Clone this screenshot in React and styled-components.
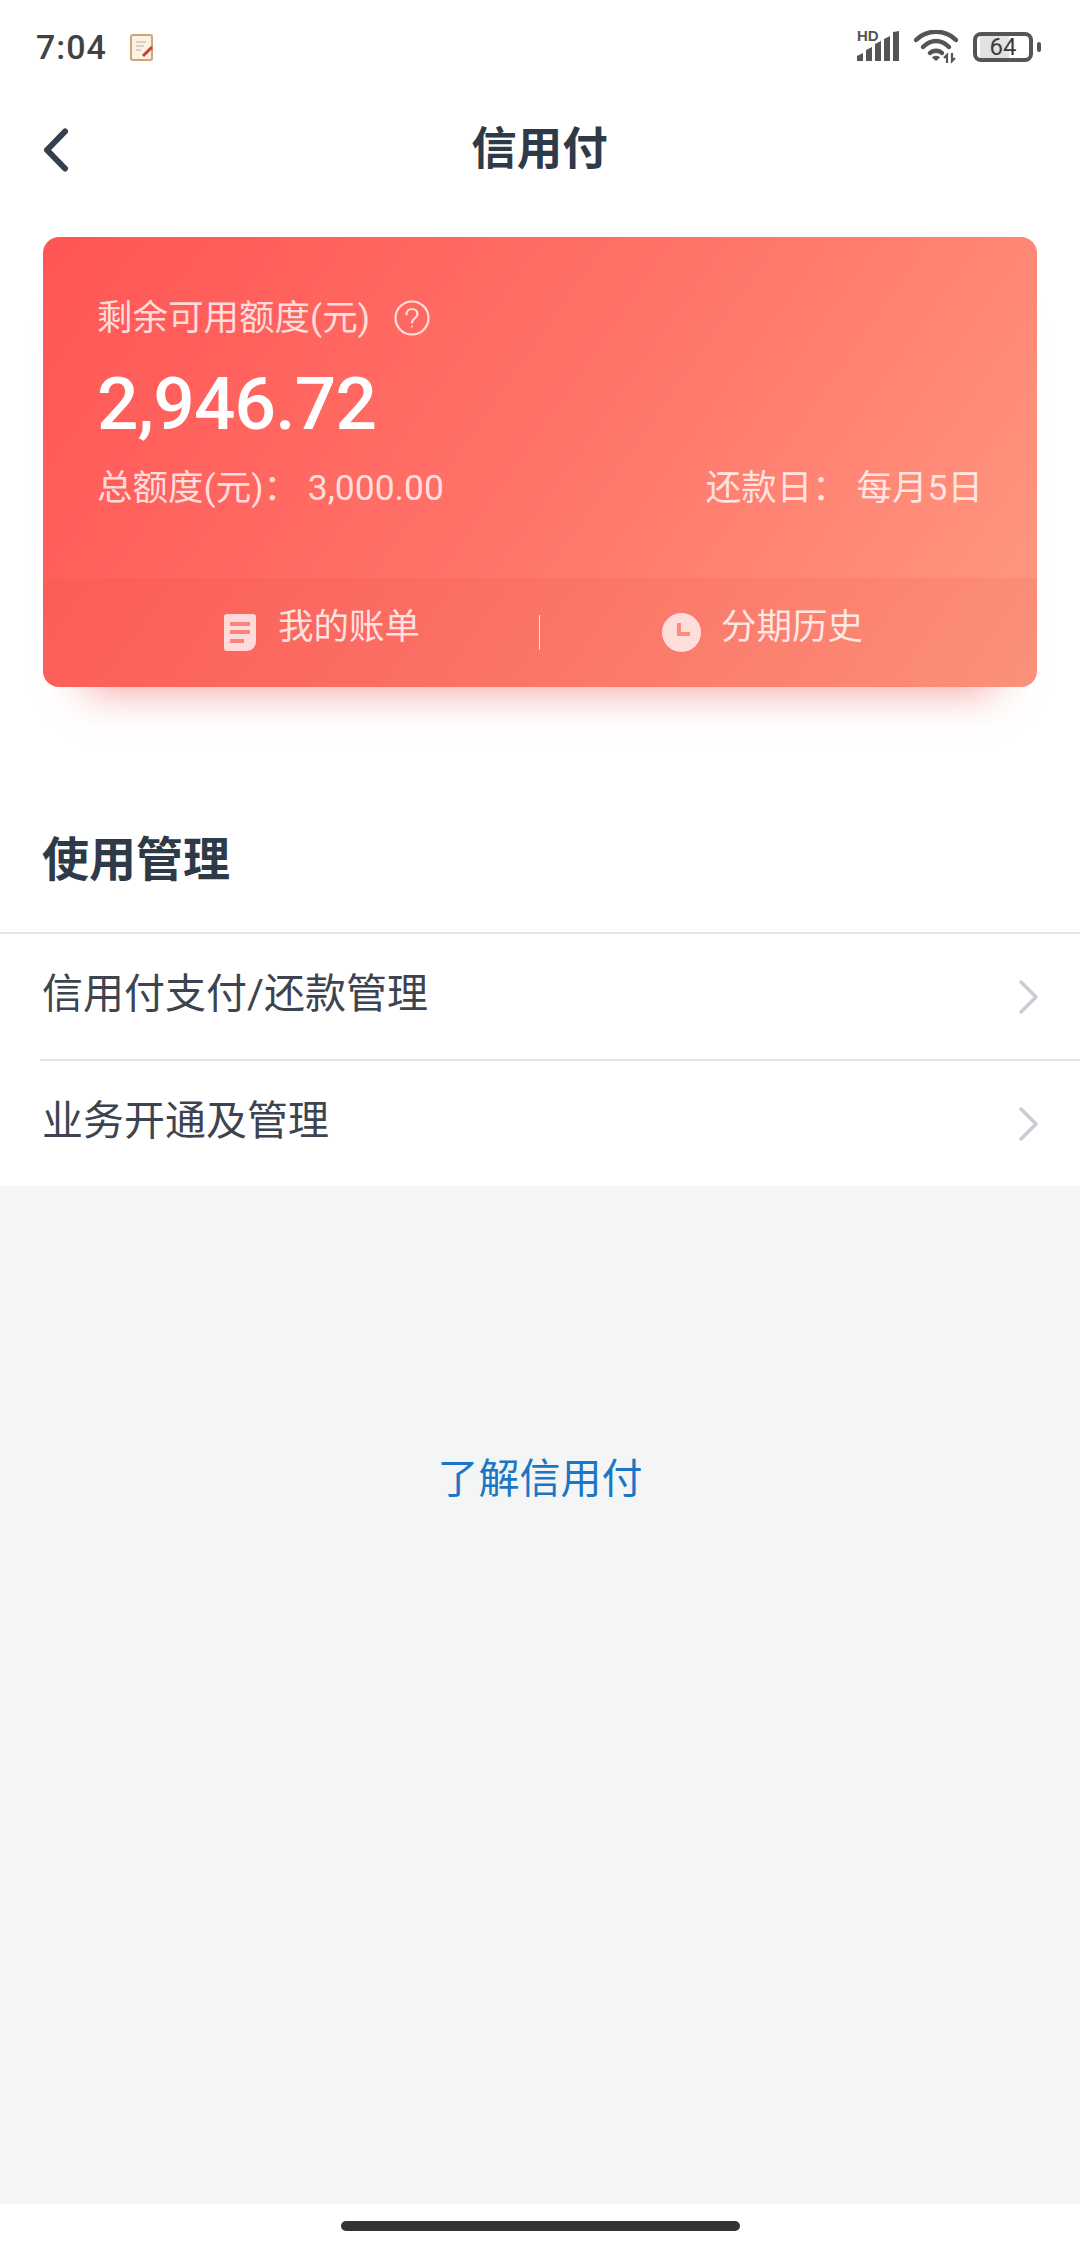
import React from 'react'
import styled, { createGlobalStyle } from 'styled-components'

const GlobalStyle = createGlobalStyle`
  html, body { margin: 0; padding: 0; background: #fff; }
  * { box-sizing: border-box; }
  body { font-family: Roboto, "Noto Sans CJK SC", sans-serif; }
`

const Page = styled.div`
  width: 1080px;
  height: 2248px;
  display: flex;
  flex-direction: column;
  background: #fff;
  overflow: hidden;
`

const StatusBar = styled.div`
  height: 94px;
  flex: none;
  display: flex;
  align-items: center;
  padding: 0 39px 0 36px;
`

const Time = styled.span`
  font-size: 34px;
  font-weight: 500;
  letter-spacing: 1px;
  color: #424242;
  width: 94px;
`

const StatusIcons = styled.div`
  margin-left: auto;
  display: flex;
  align-items: center;
`

const Signal = styled.div`
  width: 42px;
  height: 32px;
  position: relative;
  margin-right: 15px;
`

const HdLabel = styled.span`
  position: absolute;
  left: 0;
  top: -3px;
  font: 700 15px/16px "Liberation Sans", sans-serif;
  color: #555;
`

const Battery = styled.div`
  width: 60px;
  height: 30px;
  margin-left: 15px;
  border: 4px solid #555;
  border-radius: 8px;
  padding: 2px;
  display: flex;
  align-items: center;
  justify-content: center;
  font-size: 24px;
  line-height: 1;
  color: #3c3c3c;
  background: linear-gradient(to right, #fff 3px, #e2e2e2 3px, #e2e2e2 62%, #fff 62%);
`

const BatteryNub = styled.div`
  width: 4px;
  height: 10px;
  margin-left: 4px;
  border-radius: 2px;
  background: #555;
`

const Nav = styled.div`
  height: 112px;
  flex: none;
  display: grid;
  grid-template-columns: 1fr auto 1fr;
  align-items: center;
  padding: 0 44px 0 43px;
`

const Title = styled.h1`
  margin: 0;
  font-size: 45.5px;
  font-weight: 700;
  line-height: 60px;
  color: #2f3a48;
`

const CreditCard = styled.div`
  flex: none;
  width: 994px;
  height: 450px;
  margin: 31px 0 0 43px;
  border-radius: 16px;
  display: flex;
  flex-direction: column;
  background: linear-gradient(125deg, #ff5555 0%, #ff7369 50%, #ff9a82 100%);
  box-shadow: 0 44px 40px -42px rgba(235, 85, 85, 0.6);
`

const CardBody = styled.div`
  height: 341px;
  flex: none;
  padding: 59px 54px 0 54px;
  color: rgba(255, 255, 255, 0.78);
`

const LabelRow = styled.div`
  display: flex;
  align-items: center;
  gap: 24px;
  height: 44px;
  font-size: 35.5px;
  line-height: 44px;
`

const Amount = styled.div`
  margin-top: 22px;
  font-size: 73px;
  line-height: 84px;
  font-weight: 500;
  color: #fff;
  letter-spacing: -0.8px;
`

const InfoRow = styled.div`
  margin-top: 20px;
  display: flex;
  justify-content: space-between;
  font-size: 35.5px;
  line-height: 44px;
`

const Band = styled.div`
  flex: 1;
  display: grid;
  grid-template-columns: 1fr 1fr;
  position: relative;
  background: rgba(215, 70, 50, 0.1);
  border-radius: 0 0 16px 16px;
`

const BandDivider = styled.div`
  position: absolute;
  left: 496px;
  top: 37px;
  width: 1px;
  height: 35px;
  background: rgba(255, 255, 255, 0.75);
`

const BandItem = styled.div`
  display: flex;
  align-items: center;
  justify-content: ${p => (p.$side === 'left' ? 'flex-end' : 'flex-start')};
  padding: ${p => (p.$side === 'left' ? '0 120px 0 0' : '0 0 0 122px')};
  gap: ${p => (p.$side === 'left' ? '22px' : '20px')};
  font-size: 35.5px;
  color: rgba(255, 255, 255, 0.82);
`

const BandText = styled.span`
  position: relative;
  top: -6px;
  line-height: 44px;
`

const SectionTitle = styled.h2`
  flex: none;
  margin: 0;
  height: 245px;
  padding: 143px 42px 0;
  font-size: 47px;
  line-height: 60px;
  font-weight: 700;
  color: #2f3a48;
`

const Row = styled.div`
  height: 127px;
  flex: none;
  display: flex;
  align-items: center;
  margin-left: ${p => (p.$inset ? '40px' : '0')};
  padding: 0 41px 0 ${p => (p.$inset ? '2px' : '42px')};
  border-top: 2px solid #e4e5e7;
`

const RowText = styled.span`
  position: relative;
  top: -3px;
  font-size: 41px;
  line-height: 56px;
  color: #3d444f;
`

const Chevron = styled.svg`
  margin-left: auto;
  display: block;
`

const Footer = styled.div`
  flex: 1;
  padding-top: 263px;
  text-align: center;
  background: #f4f5f7;
`

const LearnLink = styled.a`
  font-size: 41px;
  line-height: 60px;
  color: #1b77c5;
`

const HomeArea = styled.div`
  height: 44px;
  flex: none;
  padding-top: 17px;
  background: #fff;
`

const HomeBar = styled.div`
  width: 399px;
  height: 10px;
  margin: 0 auto;
  border-radius: 5px;
  background: #333;
`

const NoteIcon = () => (
  <svg width="24" height="27" viewBox="0 0 24 27">
    <rect x="1" y="1" width="21" height="25" rx="2" fill="#fdf1df" stroke="#cfa47c" strokeWidth="2" />
    <path d="M6 8h10M6 12h8M6 16h5" stroke="#b9b0a4" strokeWidth="1.2" />
    <path d="M13 22l9-9" stroke="#c5432c" strokeWidth="3" />
  </svg>
)

const SignalBars = () => (
  <svg width="42" height="32" viewBox="0 0 42 32">
    <path d="M0 30v-5l6-3v8zM9 30V19l6-3v14zM18 30V13l6-3v20zM27 30V8l6-3v25zM36 30V1l6-1v30z" fill="#555" />
  </svg>
)

const WifiIcon = () => (
  <svg width="44" height="34" viewBox="0 0 44 34" fill="none">
    <path d="M2 10C13 -1 31 -1 42 10" stroke="#555" strokeWidth="4.5" strokeLinecap="round" />
    <path d="M9 17C17 9 27 9 35 17" stroke="#555" strokeWidth="4.5" strokeLinecap="round" />
    <path d="M16 23C19 20 25 20 28 23" stroke="#555" strokeWidth="4.5" strokeLinecap="round" />
    <path d="M19 27.5c1.5-1.5 4.500-1.500 6 0l-3 2.500z" fill="#555" stroke="#555" strokeWidth="1.500" />
    <path d="M33 33v-8l-3 3M38 23v8l3-3" stroke="#555" strokeWidth="2.200" />
  </svg>
)

const BackIcon = () => (
  <svg width="26" height="44" viewBox="0 0 26 44" fill="none">
    <path d="M22 3.500L4 22l18 18.500" stroke="#35404f" strokeWidth="6" strokeLinecap="round" strokeLinejoin="round" />
  </svg>
)

const HelpIcon = () => (
  <svg width="36" height="36" viewBox="0 0 36 36" fill="none" stroke="rgba(255,255,255,.8)" strokeWidth="2.200">
    <circle cx="18" cy="18" r="16.500" />
    <path d="M12.500 14.500c0-3.500 2.500-5.500 5.500-5.500s5.500 2 5.500 5c0 4-5.500 4.500-5.500 8.500" strokeLinecap="round" />
    <circle cx="18" cy="26.500" r="1" fill="rgba(255,255,255,.8)" stroke="none" />
  </svg>
)

const BillIcon = () => (
  <svg width="32" height="37" viewBox="0 0 32 37">
    <path d="M3 0h26a3 3 0 0 1 3 3v24c0 6-4 10-10 10H3a3 3 0 0 1-3-3V3a3 3 0 0 1 3-3z" fill="rgba(255,235,235,.88)" />
    <path d="M6 10h20M6 18h20M6 27h14" stroke="#f9837e" strokeWidth="4" />
  </svg>
)

const ClockIcon = () => (
  <svg width="39" height="39" viewBox="0 0 39 39">
    <circle cx="19.500" cy="19.500" r="19.500" fill="rgba(255,235,235,.88)" />
    <path d="M17 10v11h11" fill="none" stroke="#f88d80" strokeWidth="4" />
  </svg>
)

const RowChevron = () => (
  <Chevron width="20" height="34" viewBox="0 0 20 34" fill="none">
    <path d="M2 2l15 15L2 32" stroke="#c9cdd3" strokeWidth="3.5" strokeLinecap="round" strokeLinejoin="round" />
  </Chevron>
)

export default function App() {
  return (
    <Page>
      <GlobalStyle />
      <StatusBar>
        <Time>7:04</Time>
        <NoteIcon />
        <StatusIcons>
          <Signal>
            <HdLabel>HD</HdLabel>
            <SignalBars />
          </Signal>
          <WifiIcon />
          <Battery>64</Battery>
          <BatteryNub />
        </StatusIcons>
      </StatusBar>

      <Nav>
        <BackIcon />
        <Title>信用付</Title>
      </Nav>

      <CreditCard>
        <CardBody>
          <LabelRow>
            <span>剩余可用额度(元)</span>
            <HelpIcon />
          </LabelRow>
          <Amount>2,946.72</Amount>
          <InfoRow>
            <span>总额度(元)： 3,000.00</span>
            <span>还款日： 每月5日</span>
          </InfoRow>
        </CardBody>
        <Band>
          <BandItem $side="left">
            <BillIcon />
            <BandText>我的账单</BandText>
          </BandItem>
          <BandDivider />
          <BandItem $side="right">
            <ClockIcon />
            <BandText>分期历史</BandText>
          </BandItem>
        </Band>
      </CreditCard>

      <SectionTitle>使用管理</SectionTitle>

      <Row>
        <RowText>信用付支付/还款管理</RowText>
        <RowChevron />
      </Row>
      <Row $inset>
        <RowText>业务开通及管理</RowText>
        <RowChevron />
      </Row>

      <Footer>
        <LearnLink>了解信用付</LearnLink>
      </Footer>
      <HomeArea>
        <HomeBar />
      </HomeArea>
    </Page>
  )
}
